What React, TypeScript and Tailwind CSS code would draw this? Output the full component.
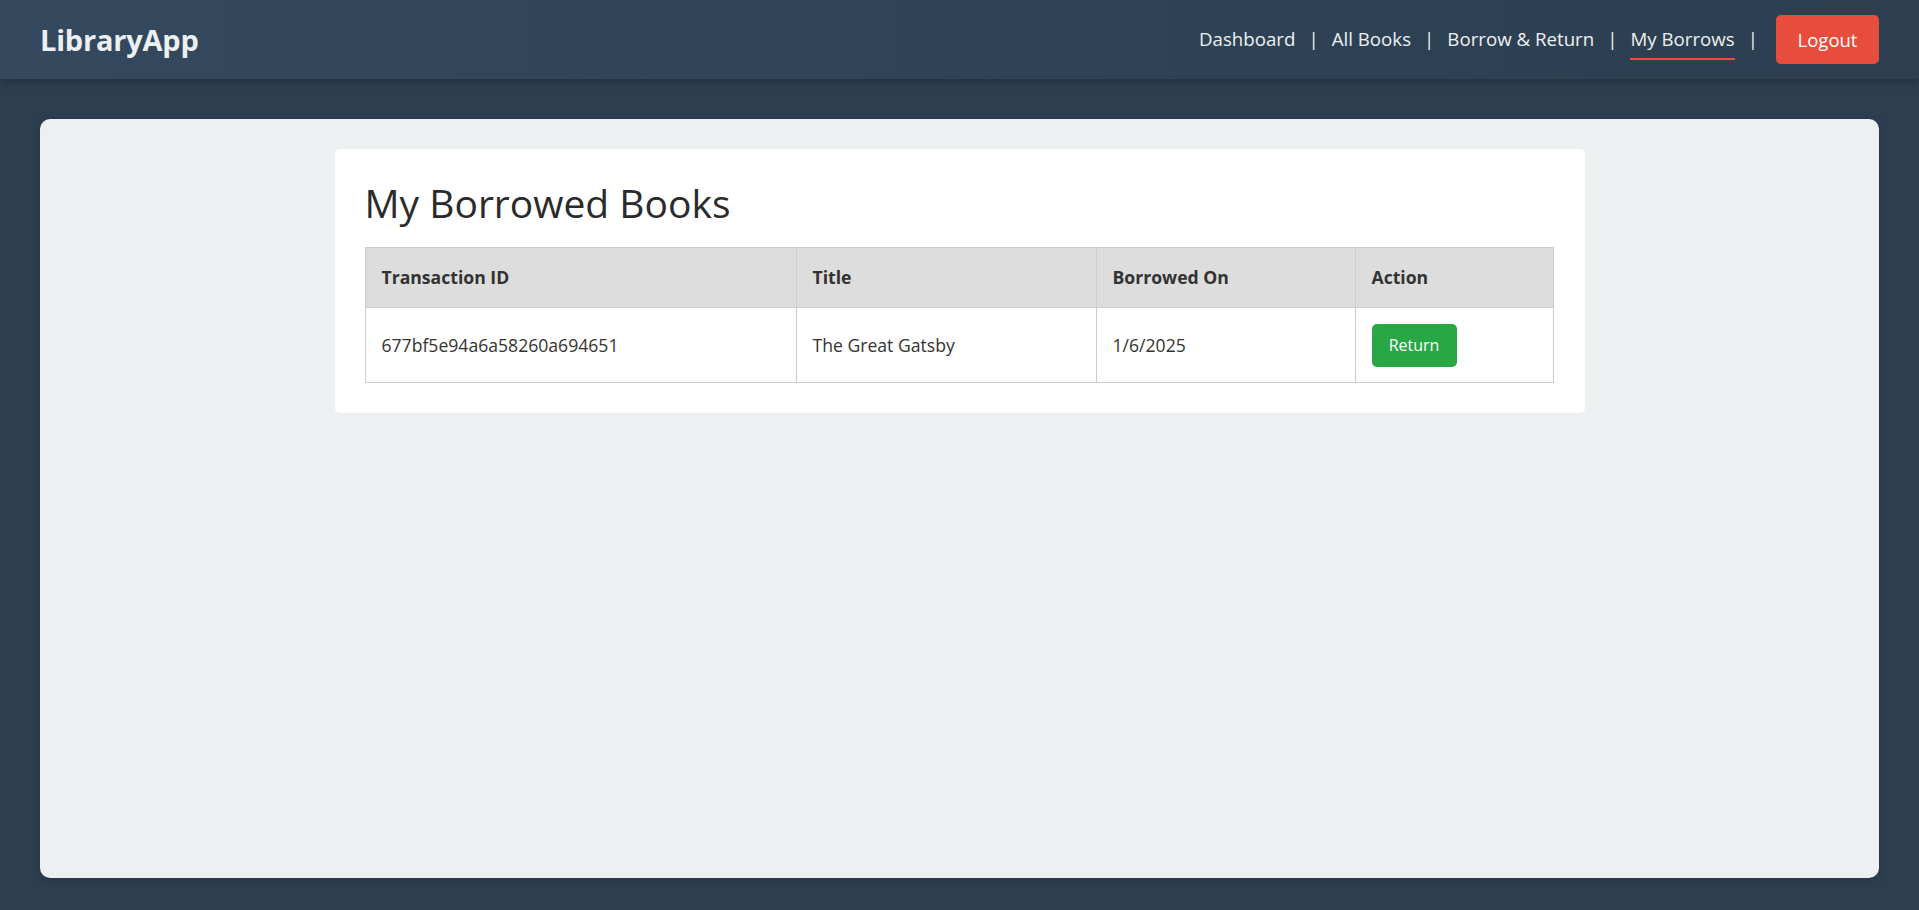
import { useState } from 'react'

const borrows = [
  { id: '677bf5e94a6a58260a694651', title: 'The Great Gatsby', date: '1/6/2025' },
]

const links = ['Dashboard', 'All Books', 'Borrow & Return', 'My Borrows']

export default function App() {
  const [rows, setRows] = useState(borrows)

  return (
    <div className="min-h-screen bg-[#2c3e50] font-['Open_Sans',sans-serif] text-[#333] pb-[32px]">
      {/* Header */}
      <header className="h-[79px] px-[40px] flex items-center justify-between bg-gradient-to-r from-[#34495e] to-[#2c3e50] shadow-[0_2px_10px_rgba(0,0,0,0.25)]">
        <div className="text-[29px] font-bold text-[#ecf0f1] tracking-[-0.2px]">LibraryApp</div>
        <nav className="flex items-center">
          {links.map((l) => (
            <div key={l} className="flex items-center">
              <a
                href="#"
                className={`relative text-[18.7px] text-[#ecf0f1] leading-[26px] ${
                  l === 'My Borrows' ? 'after:absolute after:left-0 after:right-0 after:top-[32px] after:h-[2px] after:bg-[#e74c3c]' : ''
                }`}
              >
                {l}
              </a>
              <span className="mx-[13px] text-[18.7px] text-[#ecf0f1]">|</span>
            </div>
          ))}
          <button className="ml-[5px] h-[49px] w-[103px] rounded-[5px] bg-[#e74c3c] text-white text-[18.5px]">
            Logout
          </button>
        </nav>
      </header>

      {/* Content panel */}
      <main className="mx-[40px] mt-[40px] h-[759px] rounded-[10px] bg-[#ecf0f1] p-[30px] shadow-[0_2px_8px_rgba(0,0,0,0.15)]">
        <div className="max-w-[1250px] mx-auto bg-white rounded-[5px] p-[30px]">
          <h1 className="text-[39px] leading-[48px] font-normal text-[#2b2b2b] mb-[20px]">My Borrowed Books</h1>
          <table className="w-[1189px] border-collapse text-[17.6px]">
            <thead>
              <tr className="bg-[#dddddd]">
                <th className="w-[431px] h-[60px] border border-[#cccccc] px-[16px] text-left font-bold">Transaction ID</th>
                <th className="w-[300px] border border-[#cccccc] px-[16px] text-left font-bold">Title</th>
                <th className="w-[259px] border border-[#cccccc] px-[16px] text-left font-bold">Borrowed On</th>
                <th className="border border-[#cccccc] px-[16px] text-left font-bold">Action</th>
              </tr>
            </thead>
            <tbody>
              {rows.map((r) => (
                <tr key={r.id}>
                  <td className="h-[75px] border border-[#cccccc] px-[16px]">{r.id}</td>
                  <td className="border border-[#cccccc] px-[16px]">{r.title}</td>
                  <td className="border border-[#cccccc] px-[16px]">{r.date}</td>
                  <td className="border border-[#cccccc] px-[16px]">
                    <button
                      onClick={() => setRows(rows.filter((x) => x.id !== r.id))}
                      className="h-[43px] w-[85px] rounded-[5px] bg-[#28a745] text-white text-[16px]"
                    >
                      Return
                    </button>
                  </td>
                </tr>
              ))}
            </tbody>
          </table>
        </div>
      </main>
    </div>
  )
}
